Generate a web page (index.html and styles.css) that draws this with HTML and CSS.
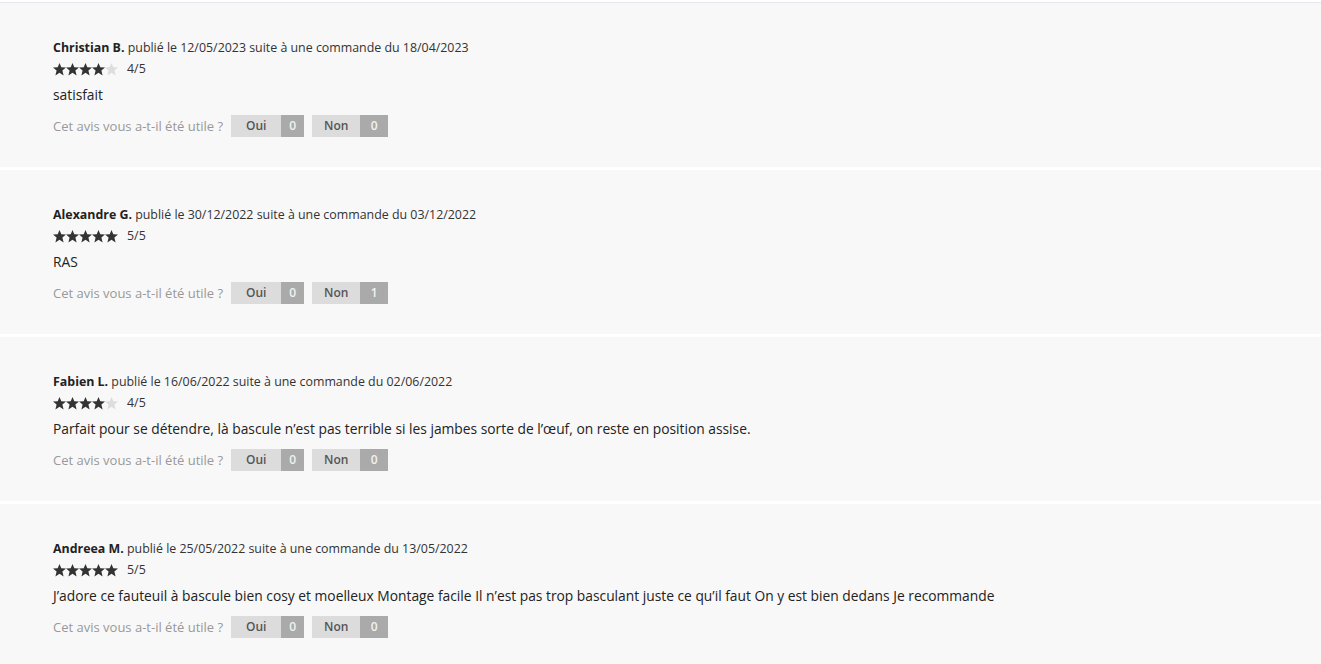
FILE: index.html
```html
<html>
    <head>
        <meta charset="utf-8">
        <title>Avis clients</title>
        <link rel="stylesheet" href="styles.css">
    </head>
    <body class="body">
        <div class="avis-list">
            <div class="avis">
                <div class="avis-head"><b>Christian B.</b> publié le 12/05/2023 suite à une commande du 18/04/2023</div>
                <div class="avis-note">
                    <svg class="stars" width="65" height="13" viewBox="0 0 65 13">
                        <use href="#star" x="0" class="on"/><use href="#star" x="13" class="on"/><use href="#star" x="26" class="on"/><use href="#star" x="39" class="on"/><use href="#star" x="52" class="off"/>
                    </svg>
                    <span>4/5</span>
                </div>
                <div class="avis-text">satisfait</div>
                <div class="avis-utile">
                    <span class="question">Cet avis vous a-t-il été utile ?</span>
                    <span class="vote oui"><span class="label">Oui</span><span class="count">0</span></span>
                    <span class="vote non"><span class="label">Non</span><span class="count">0</span></span>
                </div>
            </div>
            <div class="avis">
                <div class="avis-head"><b>Alexandre G.</b> publié le 30/12/2022 suite à une commande du 03/12/2022</div>
                <div class="avis-note">
                    <svg class="stars" width="65" height="13" viewBox="0 0 65 13">
                        <use href="#star" x="0" class="on"/><use href="#star" x="13" class="on"/><use href="#star" x="26" class="on"/><use href="#star" x="39" class="on"/><use href="#star" x="52" class="on"/>
                    </svg>
                    <span>5/5</span>
                </div>
                <div class="avis-text">RAS</div>
                <div class="avis-utile">
                    <span class="question">Cet avis vous a-t-il été utile ?</span>
                    <span class="vote oui"><span class="label">Oui</span><span class="count">0</span></span>
                    <span class="vote non"><span class="label">Non</span><span class="count">1</span></span>
                </div>
            </div>
            <div class="avis">
                <div class="avis-head"><b>Fabien L.</b> publié le 16/06/2022 suite à une commande du 02/06/2022</div>
                <div class="avis-note">
                    <svg class="stars" width="65" height="13" viewBox="0 0 65 13">
                        <use href="#star" x="0" class="on"/><use href="#star" x="13" class="on"/><use href="#star" x="26" class="on"/><use href="#star" x="39" class="on"/><use href="#star" x="52" class="off"/>
                    </svg>
                    <span>4/5</span>
                </div>
                <div class="avis-text">Parfait pour se détendre, là bascule n’est pas terrible si les jambes sorte de l’œuf, on reste en position assise.</div>
                <div class="avis-utile">
                    <span class="question">Cet avis vous a-t-il été utile ?</span>
                    <span class="vote oui"><span class="label">Oui</span><span class="count">0</span></span>
                    <span class="vote non"><span class="label">Non</span><span class="count">0</span></span>
                </div>
            </div>
            <div class="avis">
                <div class="avis-head"><b>Andreea M.</b> publié le 25/05/2022 suite à une commande du 13/05/2022</div>
                <div class="avis-note">
                    <svg class="stars" width="65" height="13" viewBox="0 0 65 13">
                        <use href="#star" x="0" class="on"/><use href="#star" x="13" class="on"/><use href="#star" x="26" class="on"/><use href="#star" x="39" class="on"/><use href="#star" x="52" class="on"/>
                    </svg>
                    <span>5/5</span>
                </div>
                <div class="avis-text">J’adore ce fauteuil à bascule bien cosy et moelleux Montage facile Il n’est pas trop basculant juste ce qu’il faut On y est bien dedans Je recommande</div>
                <div class="avis-utile">
                    <span class="question">Cet avis vous a-t-il été utile ?</span>
                    <span class="vote oui"><span class="label">Oui</span><span class="count">0</span></span>
                    <span class="vote non"><span class="label">Non</span><span class="count">0</span></span>
                </div>
            </div>
        </div>
        <svg width="0" height="0" class="defs">
            <defs>
                <polygon id="star" points="6.5,0 8.3,4.3 13,4.6 9.4,7.6 10.6,12.4 6.5,9.8 2.4,12.4 3.6,7.6 0,4.6 4.7,4.3"/>
            </defs>
        </svg>
    </body>
</html>
```

FILE: styles.css
```css
.body{
    margin:0;
    background:#fff;
    font-family:"Open Sans","Noto Sans",sans-serif;
    color:#222;
}

.avis-list{
    margin-top:2px;
    border-top:1px solid #e7e5ee;
    display:flex;
    flex-direction:column;
    gap:3px;
}

.avis{
    background:#f8f8f8;
    height:164px;
    box-sizing:border-box;
    padding:37px 0 0 53px;
}

.avis-head{
    font-size:12.4px;
    line-height:16px;
    color:#333;
}
.avis-head b{
    color:#222;
}

.avis-note{
    display:flex;
    align-items:center;
    gap:9px;
    margin-top:5px;
    font-size:12.4px;
    line-height:16px;
    color:#333;
}
.stars .on{ fill:#333; }
.stars .off{ fill:#ddd; }

.avis-text{
    margin-top:9px;
    font-size:13.8px;
    line-height:18px;
    color:#222;
}

.avis-utile{
    display:flex;
    align-items:center;
    margin-top:11px;
    font-size:13px;
}
.question{
    color:#999;
    margin-right:8px;
}
.vote{
    display:flex;
    height:22px;
    line-height:22px;
    margin-right:8px;
    font-size:12px;
    font-weight:600;
    text-align:center;
}
.vote .label{
    background:#dcdcdc;
    color:#555;
}
.vote .count{
    background:#aaa;
    color:#f2f2f2;
}
.oui .label{ width:50px; }
.oui .count{ width:23px; }
.non .label{ width:48px; }
.non .count{ width:28px; }
.defs{
    position:absolute;
}
```
